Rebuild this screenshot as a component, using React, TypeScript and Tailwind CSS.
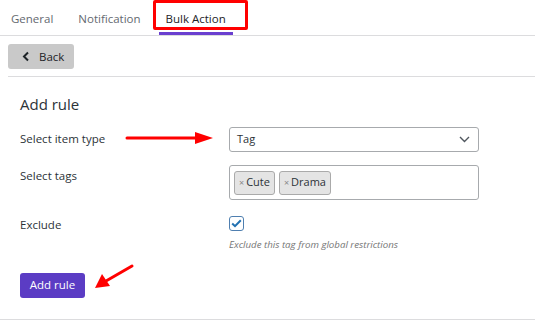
import React from "react";

export default function App() {
  return (
    <div
      className="relative w-[535px] h-[321px] bg-white overflow-hidden text-[#2c3338]"
      style={{ fontFamily: '"Open Sans", sans-serif' }}
    >
      {/* Tabs */}
      <div className="flex h-[36px] border-b border-[#dcdcde] pl-[4px] gap-[11px] text-[11.5px]">
        <div className="px-[7px] pt-[10px] text-[#646970]">General</div>
        <div className="px-[7px] pt-[10px] text-[#646970]">Notification</div>
        <div className="px-[7px] pt-[10px] text-[#1d2327] relative">
          Bulk Action
          <div className="absolute left-0 right-0 top-[32px] h-[3px] bg-[#6a3fd0]" />
        </div>
      </div>
      {/* Red highlight */}
      <div className="absolute left-[153px] top-0 w-[95px] h-[30px] border-[3px] border-[#f00] rounded-[2px]" />

      {/* Back bar */}
      <div className="ml-[8px] pt-[8px] pb-[7px] border-b border-[#dcdcde]">
        <button className="flex items-center w-[66px] h-[25px] bg-[#c9c9c9] rounded-[3px] pl-[14px] gap-[9px] text-[11.5px] text-[#1d2327]">
          <svg width="8" height="11" viewBox="0 0 8 11">
            <path d="M6 1.5 L2 5.5 L6 9.5" fill="none" stroke="#1d2327" strokeWidth="2" />
          </svg>
          Back
        </button>
      </div>

      {/* Form */}
      <div className="pl-[20px] pt-[17px] border-b border-[#dcdcde] h-[243px]">
        <div className="text-[15px] text-[#2c3338] leading-[20px]">Add rule</div>
        <div className="grid grid-cols-[209px_250px] mt-[13px] text-[11.5px] text-[#2c3338]">
          <div className="pt-[3px]">Select item type</div>
          <div className="h-[25px] border border-[#a7aaad] rounded-[3px] flex items-center justify-between pl-[7px] pr-[8px] text-[11px] text-[#2c3338]">
            <span>Tag</span>
            <svg width="11" height="7" viewBox="0 0 11 7">
              <path d="M1 1 L5.5 5.5 L10 1" fill="none" stroke="#50575e" strokeWidth="1.4" />
            </svg>
          </div>

          <div className="pt-[2px] mt-[13px]">Select tags</div>
          <div className="mt-[13px] h-[35px] border border-[#a7aaad] rounded-[3px] flex items-center gap-[4px] pl-[4px] text-[11px]">
            <span className="h-[24px] flex items-center px-[4px] bg-[#e4e4e4] border border-[#aaa] rounded-[3px] text-[#2c3338]">
              <span className="text-[#888] text-[9px] mr-[2px]">×</span>Cute
            </span>
            <span className="h-[24px] flex items-center px-[4px] bg-[#e4e4e4] border border-[#aaa] rounded-[3px] text-[#2c3338]">
              <span className="text-[#888] text-[9px] mr-[2px]">×</span>Drama
            </span>
          </div>

          <div className="mt-[16px]">Exclude</div>
          <div className="mt-[16px]">
            <div className="w-[15px] h-[15px] border border-[#4f7fb0] rounded-[3px] flex items-center justify-center">
              <svg width="11" height="9" viewBox="0 0 11 9">
                <path d="M1.2 4.5 L4 7.2 L9.8 1.2" fill="none" stroke="#2271b1" strokeWidth="2" />
              </svg>
            </div>
            <div className="mt-[7px] text-[9.7px] italic text-[#757575]">
              Exclude this tag from global restrictions
            </div>
          </div>
        </div>
        <button className="mt-[20px] w-[65px] h-[25px] bg-[#5b3cc4] text-white rounded-[3px] text-[11.5px]">
          Add rule
        </button>
      </div>

      {/* Red arrows */}
      <svg className="absolute left-0 top-0 pointer-events-none" width="535" height="321">
        <line x1="127" y1="138" x2="198" y2="138" stroke="#f00" strokeWidth="3" strokeLinecap="round" />
        <polygon points="195,132 213,138 195,144" fill="#f00" />
        <line x1="132" y1="266" x2="106" y2="281" stroke="#f00" strokeWidth="3" strokeLinecap="round" />
        <polygon points="95,288 102,274 110,286" fill="#f00" />
      </svg>
    </div>
  );
}
